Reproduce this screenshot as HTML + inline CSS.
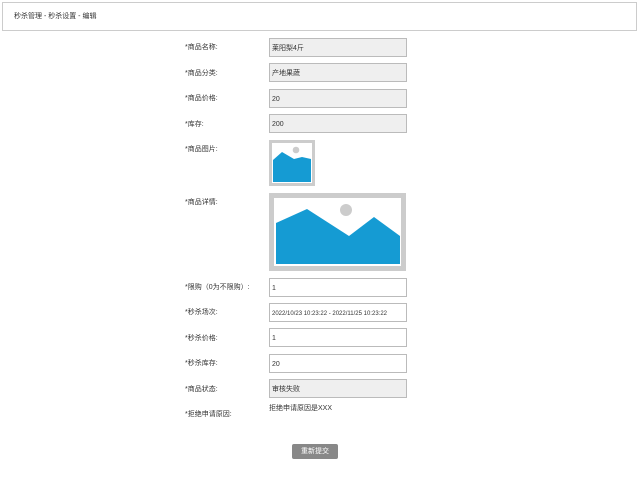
<!DOCTYPE html>
<html><head><meta charset="utf-8"><style>
body{margin:0;width:640px;height:489px;background:#fff;font-family:"Liberation Sans","Noto Sans CJK SC",sans-serif;font-size:7px;color:#333;position:relative;overflow:hidden}
.hd{position:absolute;left:2px;top:2px;width:633px;height:27px;border:1px solid #ccc;}
.hd span{position:absolute;left:11px;top:9px;line-height:10px}
.l{position:absolute;left:185px;line-height:10px}
.i{position:absolute;left:269px;width:136px;height:17px;border:1px solid #bbb;box-sizing:content-box;background:#fff}
.i.g{background:#efefef}
.i span{position:absolute;left:2px;top:5px;line-height:10px;white-space:nowrap}
.btn{position:absolute;left:292px;top:444px;width:46px;height:15px;background:#888;color:#fff;border-radius:2px;text-align:center;line-height:15px}
</style></head><body>
<div class="hd"><span>秒杀管理 - 秒杀设置 - 编辑</span></div>

<div class="l" style="top:43px">*商品名称:</div><div class="i g" style="top:38px"><span>莱阳梨4斤</span></div>
<div class="l" style="top:69px">*商品分类:</div><div class="i g" style="top:63px"><span>产地果蔬</span></div>
<div class="l" style="top:94px">*商品价格:</div><div class="i g" style="top:89px"><span>20</span></div>
<div class="l" style="top:120px">*库存:</div><div class="i g" style="top:114px"><span>200</span></div>

<div class="l" style="top:145px">*商品图片:</div>
<svg style="position:absolute;left:269px;top:140px" width="46" height="46" viewBox="0 0 46 46">
<rect x="0" y="0" width="46" height="46" fill="#ccc"/><rect x="3" y="3" width="40" height="40" fill="#fff"/>
<circle cx="27" cy="10" r="3.3" fill="#ccc"/>
<path d="M4 20 L13 12 L25 19 L33 17 L42 19 L42 42 L4 42Z" fill="#159bd3"/>
</svg>

<div class="l" style="top:198px">*商品详情:</div>
<svg style="position:absolute;left:269px;top:193px" width="137" height="78" viewBox="0 0 137 78">
<rect width="137" height="78" fill="#ccc"/><rect x="5" y="5" width="127" height="68" fill="#fff"/>
<circle cx="77" cy="17" r="6" fill="#ccc"/>
<path d="M7 30 L38 16 L80 43 L105 24 L131 43 L131 71 L7 71Z" fill="#159bd3"/>
</svg>

<div class="l" style="top:283px">*限购（0为不限购）:</div><div class="i" style="top:278px"><span>1</span></div>
<div class="l" style="top:308px">*秒杀场次:</div><div class="i" style="top:303px"><span style="font-size:6px">2022/10/23 10:23:22 - 2022/11/25 10:23:22</span></div>
<div class="l" style="top:334px">*秒杀价格:</div><div class="i" style="top:328px"><span>1</span></div>
<div class="l" style="top:359px">*秒杀库存:</div><div class="i" style="top:354px"><span>20</span></div>
<div class="l" style="top:385px">*商品状态:</div><div class="i g" style="top:379px"><span>审核失败</span></div>
<div class="l" style="top:410px">*拒绝申请原因:</div><div style="position:absolute;left:269px;top:404px;line-height:10px">拒绝申请原因是XXX</div>

<div class="btn">重新提交</div>
</body></html>
